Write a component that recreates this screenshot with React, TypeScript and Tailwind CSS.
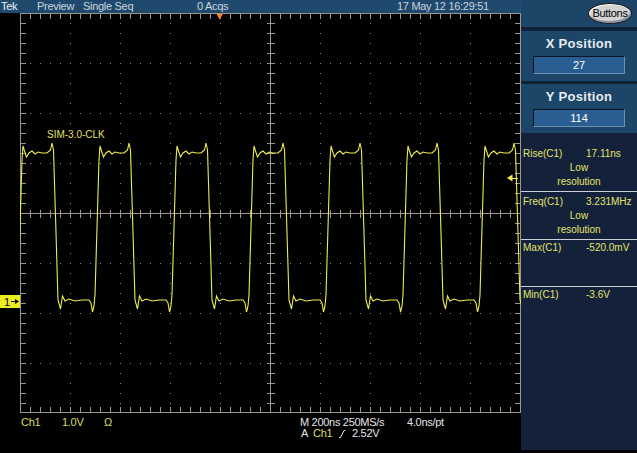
import type { ReactNode } from 'react';

const GRID = '#9d968a';
const TRACE = '#eeee4e';

// one clock period, x relative to the rising-edge crossing
const periodShape: [number, number][] = [
  [-8, 300], [-6, 303], [-4.5, 312], [-3, 306], [-2, 295],
  [2, 160], [3, 146], [4.5, 151], [6.5, 157], [9, 153],
  [12, 151], [15, 154], [18, 152], [22, 153], [27, 153],
  [30.5, 150], [32, 143], [33.5, 150], [35.75, 226], [38, 300],
  [40.5, 309], [42.5, 296], [45, 301], [49, 299], [55, 301], [62, 300],
];

function tracePoints() {
  const pts: string[] = [];
  for (let k = -1; k <= 7; k++) {
    const r = 20 + 77 * k;
    periodShape.forEach(([dx, y]) => pts.push(`${(r + dx).toFixed(1)},${y}`));
  }
  return pts.join(' ');
}

function gridPath() {
  let d = '';
  // border ticks
  for (let x = 30; x <= 510; x += 10) {
    d += `M${x + 0.5} 13V19M${x + 0.5} 407V413`;
    d += `M${x + 0.5} 209.5V217.5`;
  }
  for (let y = 23; y <= 403; y += 10) {
    d += `M20 ${y + 0.5}H26M515 ${y + 0.5}H521`;
    d += `M266.5 ${y + 0.5}H274.5`;
  }
  d += 'M20 213.5H521M270.5 13V413';
  return d;
}

function dotPath() {
  let d = '';
  for (const x of [70, 120, 170, 220, 320, 370, 420, 470]) {
    for (let y = 23; y <= 403; y += 10) d += `M${x} ${y}h1v1h-1z`;
  }
  for (const y of [63, 113, 163, 263, 313, 363]) {
    for (let x = 30; x <= 510; x += 10) d += `M${x} ${y}h1v1h-1z`;
  }
  return d;
}

function Scope() {
  return (
    <svg width={521} height={400} viewBox="0 13 521 400" className="block">
      <defs>
        <clipPath id="grat">
          <rect x={20} y={13} width={501} height={400} />
        </clipPath>
      </defs>
      <path d={dotPath()} fill="#8c867c" />
      <path d={gridPath()} stroke={GRID} strokeWidth={1} fill="none" shapeRendering="crispEdges" />
      <rect x={20.5} y={13.5} width={500} height={399} stroke={GRID} fill="none" shapeRendering="crispEdges" />
      <polyline points={tracePoints()} fill="none" stroke={TRACE} strokeWidth={1.1} clipPath="url(#grat)" />
      <text x={47} y={138} fontSize={10} fill="#e2e25e" fontFamily="Liberation Sans, Arial, sans-serif">
        SIM-3.0-CLK
      </text>
      {/* trigger position */}
      <polygon points="216.5,14 223,14 219.7,19.5" fill="#ff7f1e" />
      {/* trigger level */}
      <polygon points="507,178 512.5,174.5 512.5,181.5" fill={TRACE} />
      <path d="M512 178.5H518" stroke={TRACE} />
      {/* channel 1 ground marker */}
      <rect x={0} y={295} width={20} height={13} fill="#ecec22" />
      <text x={4} y={306} fontSize={11} fill="#000" fontFamily="Liberation Sans, Arial, sans-serif">
        1
      </text>
      <path d="M11 301.5H16" stroke="#000" />
      <polygon points="15,299 19,301.5 15,304" fill="#000" />
    </svg>
  );
}

function TopBar() {
  return (
    <div className="h-[13px] bg-[#1f4a6e] flex text-[11px] leading-[13px] tracking-[-0.3px] text-[#c9d3de] pl-[1px] whitespace-nowrap">
      <span className="w-[36px] text-[#eef2f6]">Tek</span>
      <span className="w-[46px]">Preview</span>
      <span className="w-[114px]">Single Seq</span>
      <span className="w-[200px]">0 Acqs</span>
      <span>17 May 12 16:29:51</span>
    </div>
  );
}

function Readout() {
  return (
    <div className="h-[40px] flex pt-[4px] text-[11px] leading-[11px] tracking-[-0.3px] whitespace-nowrap">
      <div className="w-[300px] pl-[21px] flex text-[#dcdc64]">
        <span className="w-[41px]">Ch1</span>
        <span className="w-[42px]">1.0V</span>
        <span>Ω</span>
      </div>
      <div className="flex flex-col text-[#e4e4e4]">
        <div className="flex">
          <span className="w-[107px]">M 200ns 250MS/s</span>
          <span>4.0ns/pt</span>
        </div>
        <div className="flex items-center">
          <span className="w-[13px] pl-[1px]">A</span>
          <span className="w-[26px] text-[#dcdc64]">Ch1</span>
          <svg width={13} height={11} className="block">
            <path d="M0 9.5H1.5L5 2.5H6.5" stroke="#e4e4e4" fill="none" />
          </svg>
          <span>2.52V</span>
        </div>
      </div>
    </div>
  );
}

function PositionBox({ title, value, h }: { title: string; value: string; h: string }) {
  return (
    <div className={`${h} bg-[#1d4567] pt-[5px] flex flex-col items-center`}>
      <div className="text-[13px] leading-[16px] font-bold text-[#e6ecf2] tracking-[0.3px]">{title}</div>
      <div className="mt-[4px] w-[92px] h-[18px] bg-[#2a5d91] border-t border-l border-[#0a1626] border-b border-r border-b-[#6a8fb4] border-r-[#6a8fb4] text-[11px] leading-[16px] text-white text-center">
        {value}
      </div>
    </div>
  );
}

function Row({ label, value }: { label: string; value: string }) {
  return (
    <div className="flex pl-[2px]">
      <span className="w-[63px]">{label}</span>
      <span>{value}</span>
    </div>
  );
}

function Rule({ className }: { className: string }): ReactNode {
  return <div className={`h-px bg-[#c9d1da] ${className}`} />;
}

function SidePanel() {
  return (
    <div className="w-[116px] h-[450px] flex flex-col bg-[#13223a]">
      <div className="h-[27px] bg-[#1d4567] flex justify-end items-start pt-[3px] pr-[5px]">
        <div className="w-[44px] h-[21px] rounded-[50%] bg-[#d2d2d2] border border-[#1a1a1a] shadow-[inset_-1px_-2px_0_#8d959c,inset_1px_1px_0_#ffffff] text-[11px] tracking-[-0.3px] text-black flex items-center justify-center">
          Buttons
        </div>
      </div>
      <div className="h-[4px] bg-[#0f2236]" />
      <PositionBox title="X Position" value="27" h="h-[50px]" />
      <div className="h-[3px] bg-[#0f2236]" />
      <PositionBox title="Y Position" value="114" h="h-[49px]" />
      <div className="flex-1 pt-[14px] text-[10px] leading-[14px] text-[#e4e26c] whitespace-nowrap">
        <Row label="Rise(C1)" value="17.11ns" />
        <div className="text-center">Low</div>
        <div className="text-center">resolution</div>
        <Rule className="mt-[2px]" />
        <div className="mt-[3px]">
          <Row label="Freq(C1)" value="3.231MHz" />
        </div>
        <div className="text-center">Low</div>
        <div className="text-center">resolution</div>
        <Rule className="mt-[2px]" />
        <div className="mt-[1px]">
          <Row label="Max(C1)" value="-520.0mV" />
        </div>
        <Rule className="mt-[31px]" />
        <div className="mt-[1px]">
          <Row label="Min(C1)" value="-3.6V" />
        </div>
      </div>
    </div>
  );
}

export default function App() {
  return (
    <div className="flex w-[637px] h-[453px] bg-black overflow-hidden font-['Liberation_Sans',Arial,sans-serif]">
      <div className="flex flex-col w-[521px]">
        <TopBar />
        <Scope />
        <Readout />
      </div>
      <SidePanel />
    </div>
  );
}
